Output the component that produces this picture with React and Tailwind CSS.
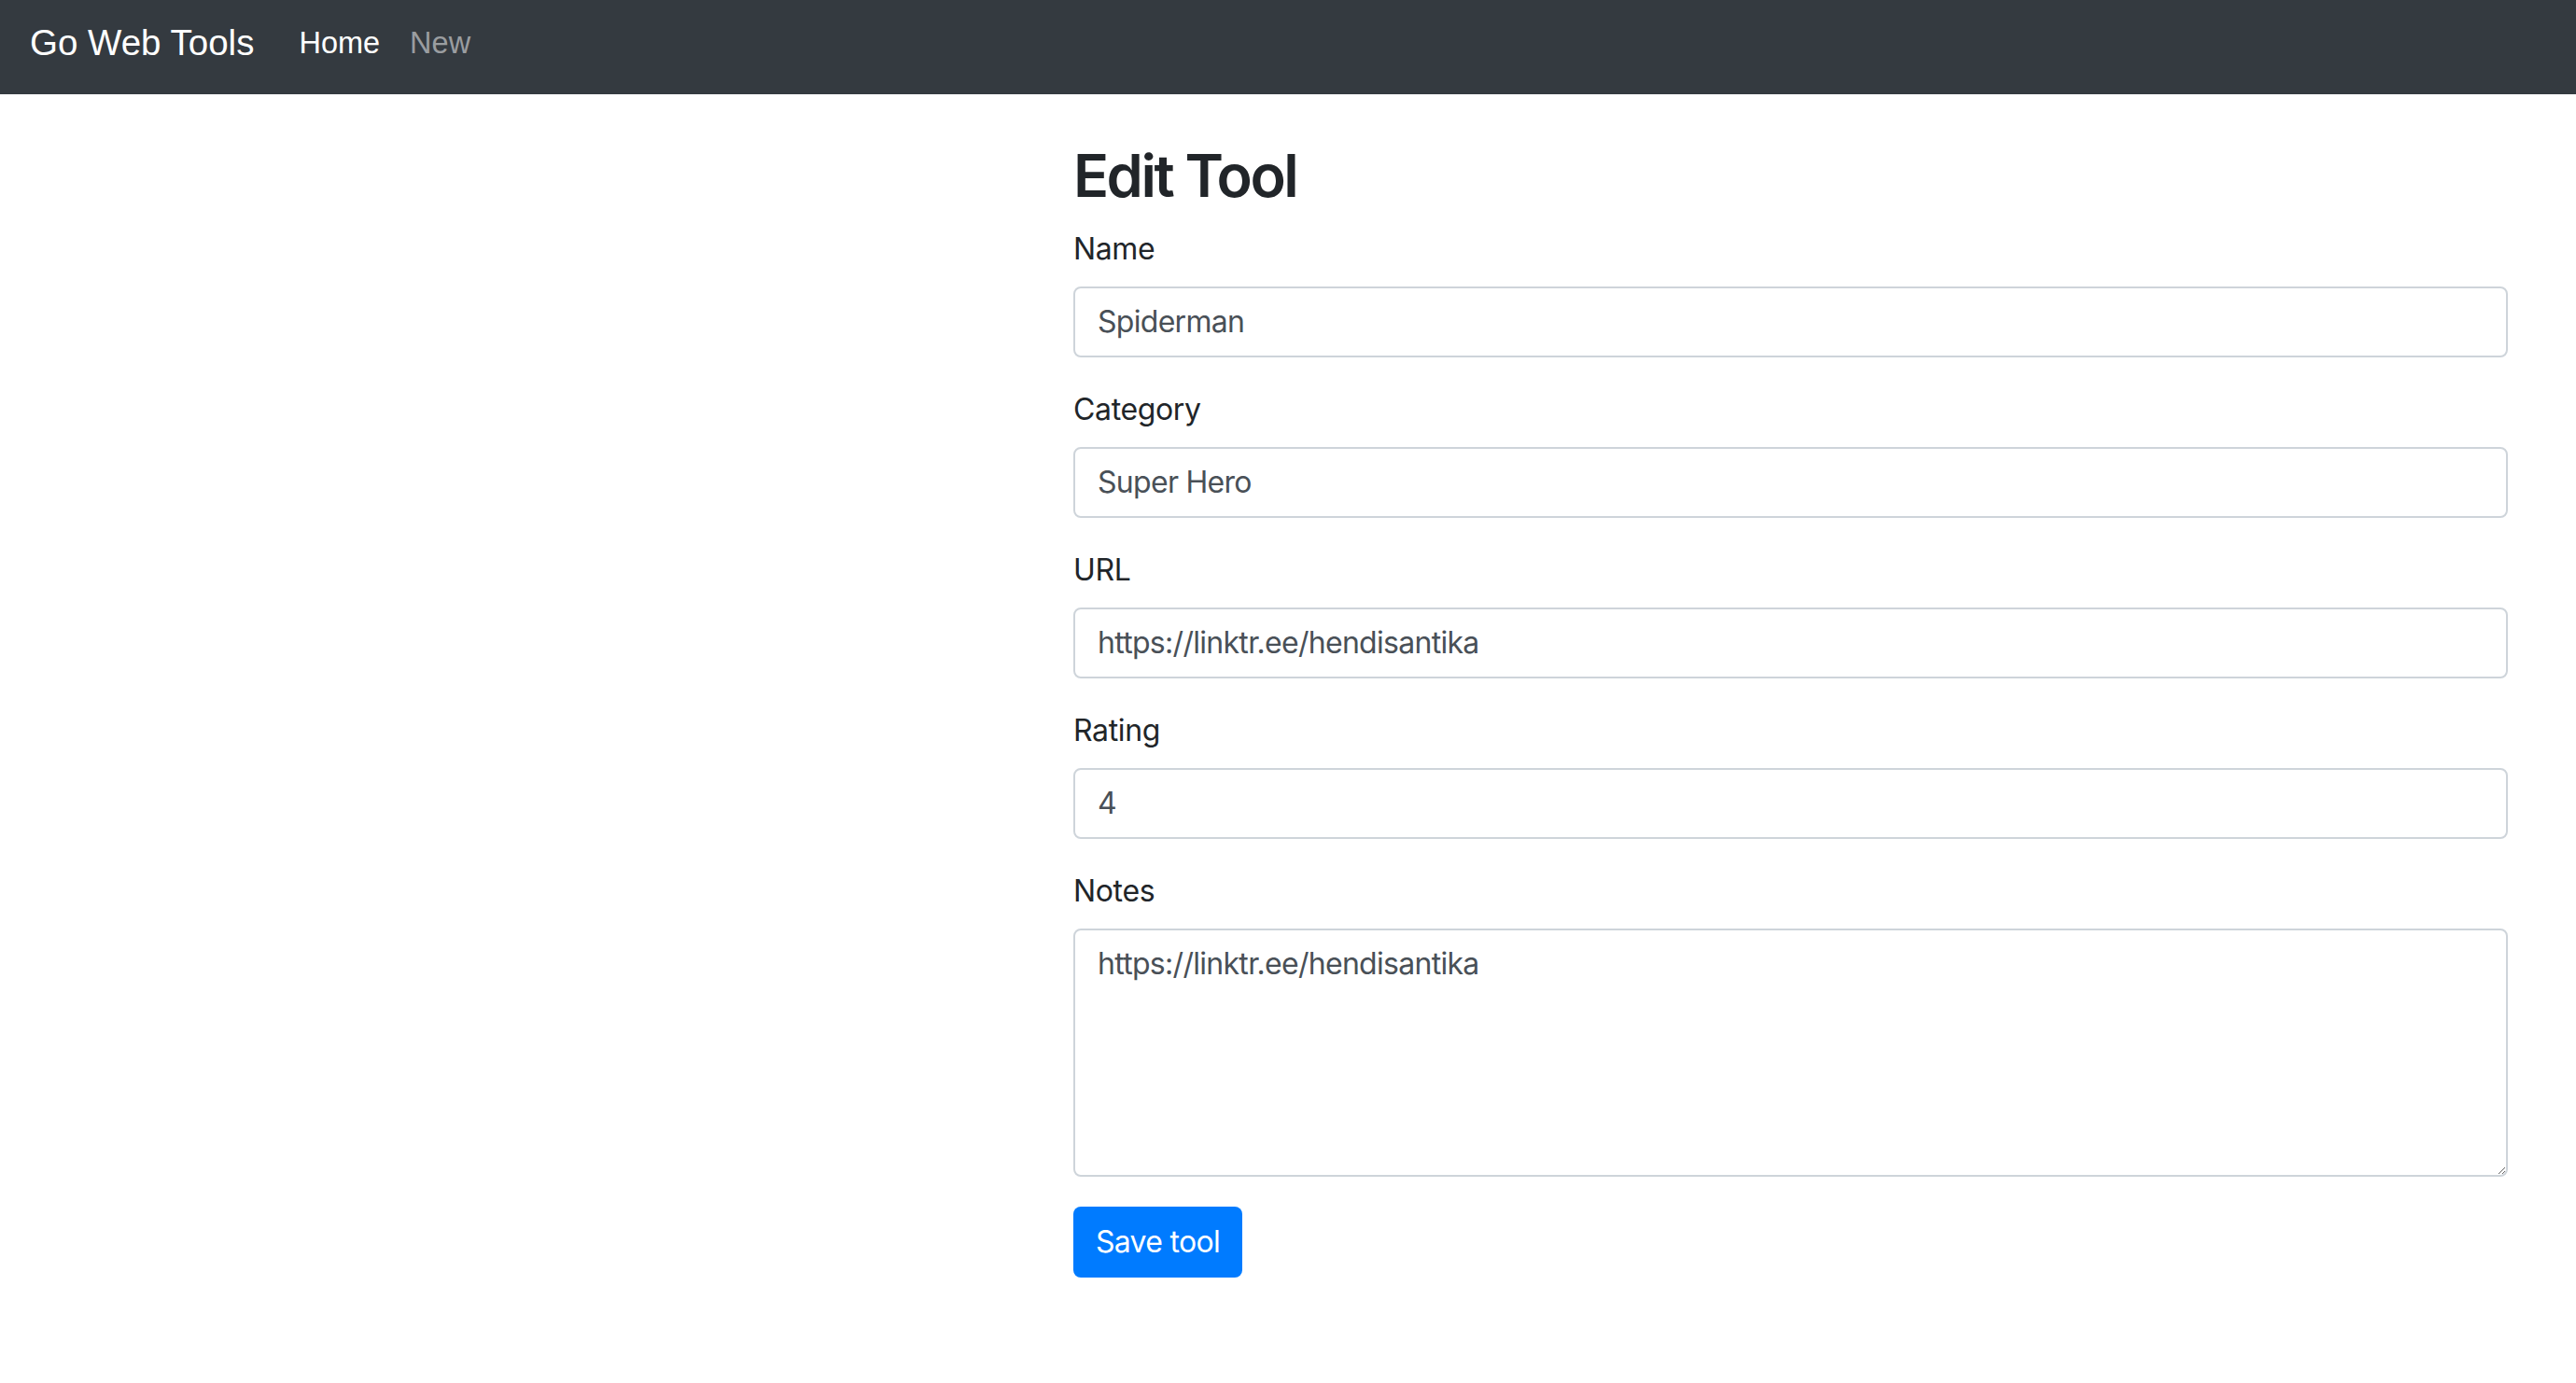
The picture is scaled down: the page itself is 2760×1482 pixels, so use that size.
const fields = [
  { id: "name", label: "Name", value: "Spiderman" },
  { id: "category", label: "Category", value: "Super Hero" },
  { id: "url", label: "URL", value: "https://linktr.ee/hendisantika" },
  { id: "rating", label: "Rating", value: "4" },
]

function Navbar() {
  return (
    <nav className="h-[101px] bg-[#343a40] flex items-center px-8 pb-2 font-['Liberation_Sans',Arial,sans-serif]">
      <a href="#" className="text-[38.5px] text-white mr-8 leading-none">
        Go Web Tools
      </a>
      <ul className="flex items-center">
        <li>
          <a href="#" className="block px-4 text-[32.5px] text-white leading-none">
            Home
          </a>
        </li>
        <li>
          <a href="#" className="block px-4 text-[32.5px] text-[#9a9da0] leading-none">
            New
          </a>
        </li>
      </ul>
    </nav>
  )
}

export default function App() {
  return (
    <div className="min-h-screen bg-white font-['Inter','Noto_Sans',sans-serif] text-[#212529]">
      <Navbar />
      <main className="grid grid-cols-12 pt-[49px] pb-20">
        <div className="col-start-6 col-span-7 pr-[73px]">
          <h2 className="text-[63px] leading-[1.22] font-semibold tracking-[-0.04em] mb-4">Edit Tool</h2>
          <form onSubmit={(e) => e.preventDefault()} className="tracking-[-0.022em]">
            {fields.map((field) => (
              <div key={field.id} className="mb-8">
                <label htmlFor={field.id} className="block text-[32px] leading-[48px] mb-4">
                  {field.label}
                </label>
                <input
                  id={field.id}
                  type="text"
                  defaultValue={field.value}
                  className="block w-full h-[76px] px-6 py-3 text-[32px] leading-[48px] tracking-[-0.022em] text-[#495057] border-2 border-[#ced4da] rounded-lg outline-none"
                />
              </div>
            ))}
            <div className="mb-8">
              <label htmlFor="notes" className="block text-[32px] leading-[48px] mb-4">
                Notes
              </label>
              <textarea
                id="notes"
                defaultValue="https://linktr.ee/hendisantika"
                className="block w-full h-[266px] px-6 py-3 text-[32px] leading-[48px] tracking-[-0.022em] text-[#495057] border-2 border-[#ced4da] rounded-lg outline-none"
              />
            </div>
            <button
              type="submit"
              className="h-[76px] px-6 text-[32px] leading-[48px] tracking-[-0.022em] text-white bg-[#007bff] rounded-lg"
            >
              Save tool
            </button>
          </form>
        </div>
      </main>
    </div>
  )
}
